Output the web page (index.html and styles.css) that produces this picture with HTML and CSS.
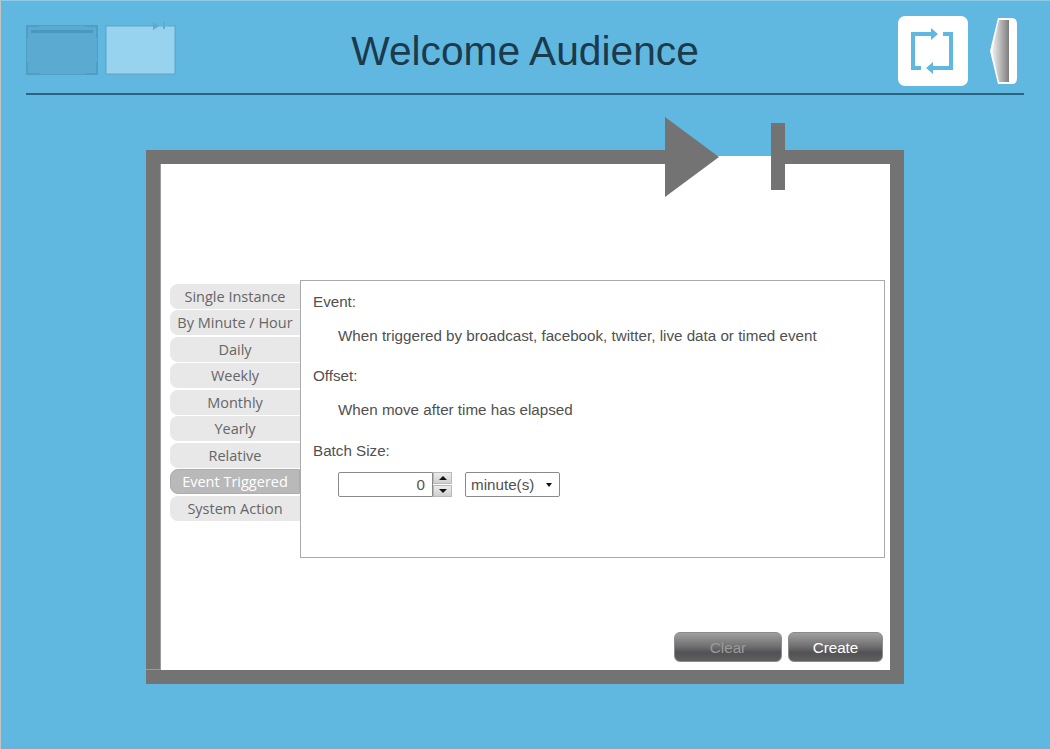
FILE: index.html
```html
<!DOCTYPE html>
<html lang="en">
<head>
    <meta charset="UTF-8">
    <title>Welcome Audience</title>
    <link rel="stylesheet" href="styles.css">
</head>
<body>
    <header class="top">
        <div class="thumbs">
            <svg class="thumb" width="72" height="50" viewBox="0 0 72 50">
                <rect x="0" y="0" width="72" height="50" fill="#5aaad1"/>
                <rect x="0.5" y="0.5" width="71" height="49" fill="none" stroke="#529fc6"/>
                <path d="M1 13V1H13M59 1H71V13M71 37V49H59M13 49H1V37" fill="none" stroke="#4f9ec5" stroke-width="2"/>
                <rect x="5" y="5" width="62" height="3" fill="#4a98bf"/>
            </svg>
            <svg class="thumb" width="71" height="54" viewBox="0 0 71 54">
                <rect x="0.75" y="4.75" width="69.5" height="48.5" fill="#97d2ef" stroke="#64a8ca" stroke-width="1.5"/>
                <rect x="48" y="2" width="15" height="3" fill="#60b8e0"/>
                <path d="M48 1L54 5L48 9Z" fill="#64a8ca"/>
                <rect x="58" y="1" width="2" height="7" fill="#64a8ca"/>
            </svg>
        </div>
        <h1 class="title">Welcome Audience</h1>
        <div class="actions">
            <div class="repeat">
                <svg width="70" height="70" viewBox="0 0 70 70">
                    <path d="M23 52H15V18H34M45 18H53V52H34" fill="none" stroke="#60b8e0" stroke-width="4"/>
                    <path d="M33 12L40 18L33 24ZM35 46L28 52L35 58Z" fill="#60b8e0"/>
                </svg>
            </div>
            <svg class="door" width="28" height="68" viewBox="0 0 28 68">
                <defs>
                    <linearGradient id="doorShade" x1="0" x2="1" y1="0" y2="0">
                        <stop offset="0" stop-color="#f2f2f2"/>
                        <stop offset="1" stop-color="#7d7d7d"/>
                    </linearGradient>
                </defs>
                <path d="M8 0H22Q27 0 27 6V60Q27 66 22 66H8L0 33Z" fill="#fff"/>
                <path d="M2 33L9 2H19V64H9Z" fill="url(#doorShade)"/>
            </svg>
        </div>
    </header>

    <main class="stage">
        <div class="card">
            <div class="notch"></div>
            <div class="card-body">
                <div class="schedule">
                    <ul class="tabs">
                        <li class="tab">Single Instance</li>
                        <li class="tab">By Minute / Hour</li>
                        <li class="tab">Daily</li>
                        <li class="tab">Weekly</li>
                        <li class="tab">Monthly</li>
                        <li class="tab">Yearly</li>
                        <li class="tab">Relative</li>
                        <li class="tab active">Event Triggered</li>
                        <li class="tab">System Action</li>
                    </ul>
                    <section class="panel">
                        <p class="label">Event:</p>
                        <p class="value">When triggered by broadcast, facebook, twitter, live data or timed event</p>
                        <p class="label">Offset:</p>
                        <p class="value">When move after time has elapsed</p>
                        <p class="label batch">Batch Size:</p>
                        <div class="controls">
                            <input class="number" type="text" value="0">
                            <div class="spin">
                                <span class="spin-btn"><i class="up"></i></span>
                                <span class="spin-btn"><i class="down"></i></span>
                            </div>
                            <div class="select">minute(s)<i class="down small"></i></div>
                        </div>
                    </section>
                </div>
                <div class="buttons">
                    <button class="btn disabled">Clear</button>
                    <button class="btn">Create</button>
                </div>
            </div>
            <svg class="marker" width="121" height="80" viewBox="0 0 121 80">
                <path d="M0 0L54 40L0 80Z" fill="#737373"/>
                <rect x="106" y="6" width="14" height="67" fill="#737373"/>
            </svg>
        </div>
    </main>
</body>
</html>
```

FILE: styles.css
```css
* {
    margin: 0;
    padding: 0;
    box-sizing: border-box;
}
html, body {
    height: 100%;
}
body {
    background-color: #60b8e0;
    border-top: 1px solid #8ccbe8;
    border-left: 1px solid #c4c4c4;
    font-family: "Liberation Sans", Arial, sans-serif;
    color: #505050;
    overflow: hidden;
}

/* header */
.top {
    display: grid;
    grid-template-columns: 1fr auto 1fr;
    align-items: start;
    height: 94px;
    margin: 0 26px 0 25px;
    border-bottom: 2px solid #2e6380;
}
.thumbs {
    display: flex;
    gap: 7px;
    padding-top: 20px;
}
.thumb {
    display: block;
}
.thumb:first-child {
    margin-top: 4px;
}
.title {
    font-size: 40.7px;
    font-weight: normal;
    color: #1b3a4c;
    padding-top: 27px;
    line-height: 46px;
}
.actions {
    display: flex;
    justify-content: flex-end;
    gap: 22px;
    padding-top: 15px;
    margin-right: 6px;
}
.repeat {
    width: 70px;
    height: 70px;
    background-color: #fff;
    border-radius: 7px;
}
.door {
    margin-top: 2px;
}

/* main frame */
.stage {
    padding: 55px 0 0 145px;
}
.card {
    position: relative;
    width: 758px;
    height: 534px;
    border: 14px solid #737373;
    background-color: #fff;
}
.card::before {
    content: "";
    position: absolute;
    left: -14px;
    top: 0;
    bottom: 0;
    width: 14px;
    border-right: 1px solid #9a9a9a;
    border-bottom: 1px solid #9a9a9a;
}
.notch {
    position: absolute;
    left: 505px;
    top: -14px;
    width: 106px;
    height: 14px;
    background: linear-gradient(#60b8e0 6.5px, #fff 6.5px);
}
.marker {
    position: absolute;
    left: 505px;
    top: -47px;
}
.card-body {
    display: flex;
    flex-direction: column;
    height: 100%;
    padding: 116px 5px 8px 10px;
}
.schedule {
    display: flex;
    align-items: flex-start;
}

/* tabs */
.tabs {
    list-style: none;
    width: 130px;
    padding-top: 3.5px;
}
.tab {
    height: 25px;
    margin-bottom: 1.5px;
    background-color: #e8e8e8;
    border-radius: 8px 0 0 8px;
    font-family: "Open Sans", sans-serif;
    font-size: 14.5px;
    line-height: 25px;
    text-align: center;
    color: #666;
}
.tab.active {
    background-color: #b9b9b9;
    border: 1px solid #adadad;
    line-height: 24px;
    color: #fff;
}

/* panel */
.panel {
    width: 585px;
    height: 278px;
    border: 1px solid #aaa;
    padding: 11px 12px;
    font-size: 15.2px;
    line-height: 20px;
}
.label {
    margin-bottom: 14px;
}
.value {
    padding-left: 25px;
    margin-bottom: 20px;
}
.batch {
    margin-top: 21px;
    margin-bottom: 11px;
}
.controls {
    display: flex;
    padding-left: 25px;
}
.number {
    width: 95px;
    height: 25px;
    border: 1px solid #8a8a8a;
    border-radius: 2px 0 0 2px;
    padding-right: 7px;
    font-family: "Liberation Sans", Arial, sans-serif;
    font-size: 15.2px;
    color: #555;
    text-align: right;
}
.spin {
    display: flex;
    flex-direction: column;
    gap: 1px;
    width: 19px;
    height: 25px;
    margin-right: 13px;
}
.spin-btn {
    flex: 1;
    display: flex;
    align-items: center;
    justify-content: center;
    background: linear-gradient(#ececec, #cfcfcf);
    border: 1px solid #b8b8b8;
}
.up, .down {
    display: block;
    width: 0;
    height: 0;
    border-left: 4px solid transparent;
    border-right: 4px solid transparent;
}
.up {
    border-bottom: 4px solid #111;
}
.down {
    border-top: 4px solid #111;
}
.select {
    display: flex;
    align-items: center;
    justify-content: space-between;
    width: 95px;
    height: 25px;
    border: 1px solid #8a8a8a;
    border-radius: 2px;
    padding: 0 7px 0 5px;
}
.small {
    border-left-width: 3px;
    border-right-width: 3px;
}

/* bottom buttons */
.buttons {
    display: flex;
    justify-content: flex-end;
    gap: 6px;
    margin-top: auto;
    padding-right: 2px;
}
.btn {
    width: 95px;
    height: 30px;
    border: 1px solid #8c8c8c;
    border-radius: 6px;
    background: linear-gradient(#a0a0a0, #6f6f6f 48%, #525256 70%, #5f5f62);
    font-family: "Liberation Sans", Arial, sans-serif;
    font-size: 15.2px;
    color: #fff;
}
.btn.disabled {
    width: 108px;
    color: #9a9a9a;
}
```
